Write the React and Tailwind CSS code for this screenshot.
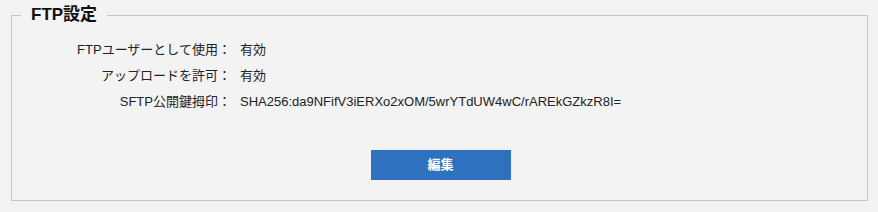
import React from 'react';

const rows = [
  { label: 'FTPユーザーとして使用', value: '有効' },
  { label: 'アップロードを許可', value: '有効' },
  { label: 'SFTP公開鍵拇印', value: 'SHA256:da9NFifV3iERXo2xOM/5wrYTdUW4wC/rAREkGZkzR8I=' },
];

export default function App() {
  return (
    <div
      className="w-[878px] h-[212px] bg-[#f3f3f3] text-[#222] pl-[11px] pr-[10px] pt-[5px]"
      style={{ fontFamily: '"Liberation Sans", Arial, "Noto Sans CJK JP", sans-serif' }}
    >
      <fieldset className="border border-[#c4c4c4] h-[196px] px-0 pt-[15px] m-0">
        <legend className="ml-[9px] px-[10px] text-[17px] font-bold text-[#111] leading-[20px]">FTP設定</legend>
        <div className="flex flex-col gap-[7px] text-[13px] leading-[19px]">
          {rows.map((r) => (
            <div key={r.label} className="flex">
              <div className="w-[219px] text-right shrink-0">{r.label}：</div>
              <div className="pl-[9px]">{r.value}</div>
            </div>
          ))}
        </div>
        <div className="flex justify-center mt-[39px] pl-[2px]">
          <button className="w-[140px] h-[30px] bg-[#2e71bf] text-white text-[13px] font-bold">編集</button>
        </div>
      </fieldset>
    </div>
  );
}
